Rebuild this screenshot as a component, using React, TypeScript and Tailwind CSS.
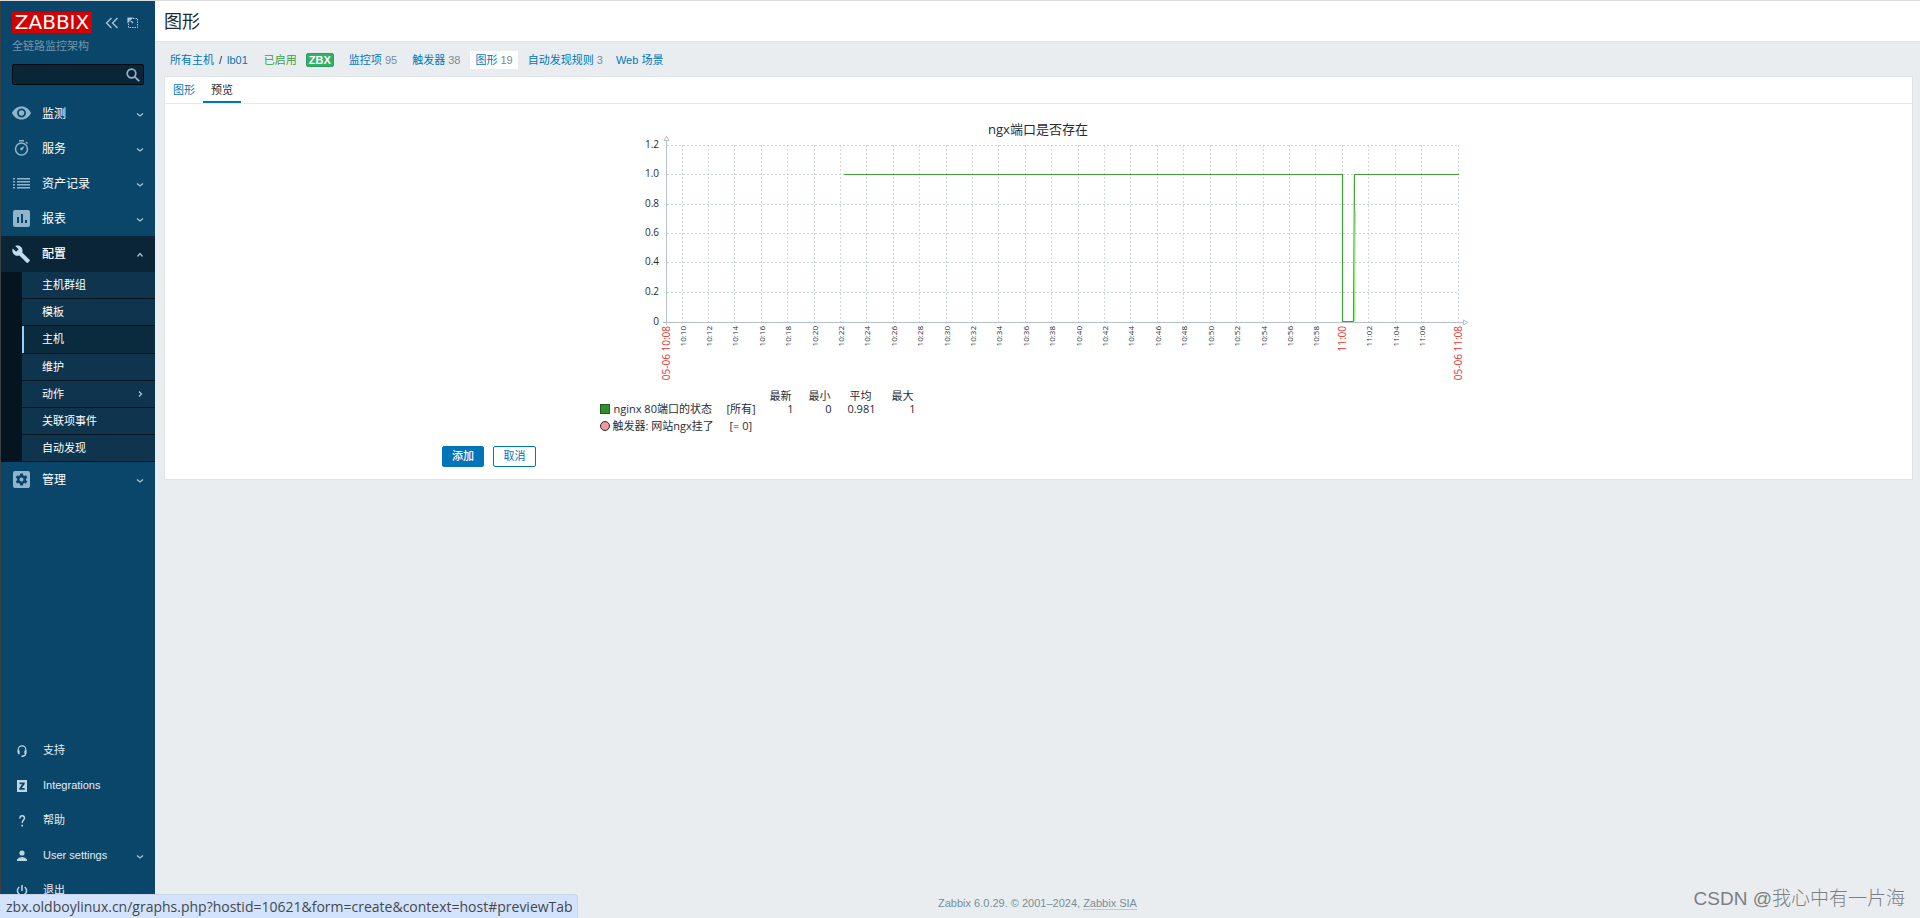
import type { ReactNode } from "react";

const CHEVRONS = {
  down: "M1 3.500l3 2.500 3-2.500",
  up: "M1.500 6.500l2.500-3 2.500 3",
  right: "M3 1.500l2.500 2.500-2.500 2.500",
};

function Chevron({ dir }: { dir: keyof typeof CHEVRONS }) {
  return (
    <svg viewBox="0 0 8 8" className="h-2 w-2 shrink-0" fill="none" stroke="#a9c3d1" strokeWidth="1.3" aria-hidden="true">
      <path d={CHEVRONS[dir]} />
    </svg>
  );
}

function MenuIcon({ name }: { name: string }) {
  const shapes: Record<string, ReactNode> = {
    eye: (
      <>
        <path fillRule="evenodd" d="M0 9C2 5 5 2.500 9.500 2.500S17 5 19 9c-2 4-5 6.500-9.500 6.500S2 13 0 9zm9.500-4.500a4.500 4.500 0 1 0 0 9 4.500 4.500 0 0 0 0-9z" />
        <circle cx="9.500" cy="9" r="2.700" />
      </>
    ),
    clock: (
      <>
        <circle cx="9.500" cy="10" r="6" fill="none" stroke="currentColor" strokeWidth="1.500" />
        <path d="M7 1h5v1.500H7zM13.500 3.500l1-1 1.500 1.500-1 1zM12.500 7l-2 4a1.300 1.300 0 0 1-1.900-1.900z" />
      </>
    ),
    list: <path d="M1 4h2v1.500H1zM5 4h13v1.500H5zM1 7h2v1.500H1zM5 7h13v1.500H5zM1 10h2v1.500H1zM5 10h13v1.500H5zM1 13h2v1.500H1zM5 13h13v1.500H5z" />,
    report: <path fillRule="evenodd" d="M3 1h13q2 0 2 2v13q0 2-2 2H3q-2 0-2-2V3q0-2 2-2zm2 7v6h2V8zm4-3v9h2V5zm4 6v3h2v-3z" />,
    wrench: <path d="M17.500 14.800 10.200 7.500c.7-1.900.3-4-1.200-5.500C7.400.4 5.100.1 3.200.9l3.400 3.400-2.400 2.400L.8 3.400C-.1 5.200.3 7.600 1.900 9.200c1.500 1.500 3.600 1.900 5.500 1.200l7.300 7.300c.3.300.8.300 1.100 0l1.800-1.800c.3-.3.300-.8-.1-1.100z" />,
    gear: (
      <>
        <path fillRule="evenodd" d="M3 1h13q2 0 2 2v13q0 2-2 2H3q-2 0-2-2V3q0-2 2-2zm5.300 2.500-.4 1.700-1.100.7-1.700-.6-1.300 2.200 1.300 1.200v1.500l-1.300 1.200 1.300 2.200 1.700-.6 1.100.7.400 1.800h2.500l.4-1.800 1.100-.7 1.700.6 1.300-2.200-1.300-1.200V8.700l1.300-1.200-1.300-2.200-1.700.6-1.100-.7-.4-1.700z" />
        <circle cx="9.500" cy="9.500" r="2" />
      </>
    ),
  };
  return (
    <svg viewBox="0 0 19 19" className="h-[19px] w-[19px] shrink-0" fill="currentColor" aria-hidden="true">
      {shapes[name]}
    </svg>
  );
}

function FooterIcon({ name }: { name: string }) {
  const shapes: Record<string, ReactNode> = {
    support: (
      <>
        <path d="M2.200 7V4.700a3.800 3.800 0 0 1 7.600 0V8q0 3-3.300 3.200" fill="none" stroke="currentColor" strokeWidth="1.200" />
        <path d="M1.600 5.500h2v3.700h-1q-1-.5-1-2zM8.400 5.500h2v2q0 1.500-1 1.700h-1zM5.500 10.500h2V12h-2z" />
      </>
    ),
    zabbix: <path fillRule="evenodd" d="M1 0h10v12H1zm2.500 2.500v1.700h2.700L3.300 8.300v1.400h5.400V8H5.800l2.900-4V2.500z" />,
    help: (
      <>
        <path d="M3.800 3.500Q4 .8 6.200.8t2.300 2.300C8.500 5 6.200 5.300 6.200 8" fill="none" stroke="currentColor" strokeWidth="1.400" />
        <path d="M5.400 9.800H7v1.700H5.400z" />
      </>
    ),
    user: (
      <>
        <circle cx="6" cy="3" r="2.600" />
        <path d="M1 11V9.500Q2.500 7 6 7t5 2.500V11z" />
      </>
    ),
    power: <path d="M3.300 2a4.600 4.600 0 1 0 5.400 0M6 0v6" fill="none" stroke="currentColor" strokeWidth="1.500" />,
  };
  return (
    <svg viewBox="0 0 12 12" className="h-3 w-3 shrink-0" fill="currentColor" aria-hidden="true">
      {shapes[name]}
    </svg>
  );
}

function MenuLink({ icon, label }: { icon: string; label: string }) {
  return (
    <a href="#" className="flex h-[35px] items-center px-[11px] text-xs text-white">
      <span className="text-[#8fb5cc]"><MenuIcon name={icon} /></span>
      <span className="ml-[11px] flex-1">{label}</span>
      <Chevron dir="down" />
    </a>
  );
}

const MAIN_MENU = [
  { icon: "eye", label: "监测" },
  { icon: "clock", label: "服务" },
  { icon: "list", label: "资产记录" },
  { icon: "report", label: "报表" },
];

const CONFIG_MENU = ["主机群组", "模板", "主机", "维护", "动作", "关联项事件", "自动发现"];

const USER_MENU = [
  { icon: "support", label: "支持" },
  { icon: "zabbix", label: "Integrations" },
  { icon: "help", label: "帮助" },
  { icon: "user", label: "User settings" },
  { icon: "power", label: "退出" },
];

function Sidebar() {
  return (
    <aside className="flex w-[155px] shrink-0 flex-col overflow-hidden border-l border-[#3c4043] bg-[#0a466a]">
      <div className="flex items-center pt-[11px] pr-[15px] pl-[11px]">
        <a href="#" className="flex h-[21px] w-20 items-center justify-center bg-[#d40000] font-['DejaVu_Sans',sans-serif] text-[20px] leading-[21px] text-white">
          ZABBIX
        </a>
        <button type="button" aria-label="收起侧边栏" className="ml-[13px] text-[#a9c9dc]">
          <svg viewBox="0 0 14 12" className="h-3 w-3.5" fill="none" stroke="currentColor" strokeWidth="1.300"><path d="M6.500 1l-5 5 5 5M12.500 1l-5 5 5 5" /></svg>
        </button>
        <button type="button" aria-label="隐藏侧边栏" className="ml-2 text-[#a9c9dc]">
          <svg viewBox="0 0 12 12" className="h-3 w-3" fill="none" stroke="currentColor">
            <path d="M6 1.500h4.500v9h-9V6" strokeDasharray="1.500 1" />
            <path d="M1 5V1h4zM2 2l4 4" fill="currentColor" strokeWidth="1.200" />
          </svg>
        </button>
      </div>
      <div className="mt-1 pl-[11px] text-[11px] leading-[18px] text-[#6f97ad]">全链路监控架构</div>
      <form className="mx-[11px] mt-[9px] flex h-[21px] items-center rounded-xs border border-[#020a10] bg-[#0a2536] pr-[3px]">
        <input type="text" aria-label="搜索" className="h-full min-w-0 flex-1 bg-transparent px-1 text-[11px] text-white outline-none" />
        <button type="button" aria-label="搜索" className="text-[#8fb5cc]">
          <svg viewBox="0 0 14 14" className="h-3.5 w-3.5" fill="none" stroke="currentColor" strokeWidth="1.700"><circle cx="5.500" cy="5.500" r="4.300" /><path d="M8.600 8.600l4.600 4.600" /></svg>
        </button>
      </form>
      <nav className="mt-[11px]">
        {MAIN_MENU.map((item) => <MenuLink key={item.label} {...item} />)}
        <a href="#" className="flex h-9 items-center bg-[#0a2536] px-[11px] text-xs font-medium text-white">
          <span className="text-[#c3dcec]"><MenuIcon name="wrench" /></span>
          <span className="ml-[11px] flex-1">配置</span>
          <Chevron dir="up" />
        </a>
        <ul className="bg-[#05151f] pl-[21px]">
          {CONFIG_MENU.map((label) => (
            <li key={label} className="border-b border-[#05151f]">
              <a
                href="#"
                className={
                  label === "主机"
                    ? "flex h-[27px] items-center border-l-2 border-[#8fd0ff] bg-[#0a2b3e] pr-[11px] pl-[18px] text-[11px] text-white"
                    : "flex h-[26px] items-center bg-[#0f344d] pr-[11px] pl-5 text-[11px] text-white"
                }
              >
                <span className="flex-1">{label}</span>
                {label === "动作" && <Chevron dir="right" />}
              </a>
            </li>
          ))}
        </ul>
        <MenuLink icon="gear" label="管理" />
      </nav>
      <nav className="mt-auto pb-[10px]">
        {USER_MENU.map(({ icon, label }) => (
          <a key={label} href="#" className="flex h-[35px] items-center pr-[11px] pl-[15px] text-[11px] text-[#e3edf3]">
            <span className="text-[#c0d6e3]"><FooterIcon name={icon} /></span>
            <span className="ml-[15px] flex-1">{label}</span>
            {icon === "user" && <Chevron dir="down" />}
          </a>
        ))}
      </nav>
    </aside>
  );
}

function Breadcrumbs() {
  return (
    <nav className="flex h-[34px] items-center pt-[2px] pl-[15px] text-[11px] text-[#0275b8]">
      <a href="#">所有主机</a>
      <span className="mx-[5px] text-[#1f2c33]">/</span>
      <a href="#">lb01</a>
      <span className="ml-4 text-[#429e47]">已启用</span>
      <span className="ml-[9px] flex h-3.5 items-center rounded-xs border border-[#2f9f5e] bg-[#34af67] px-[2px] text-[11px] font-bold text-white">ZBX</span>
      <a href="#" className="ml-[15px]">监控项 <span className="text-[#768d99]">95</span></a>
      <a href="#" className="ml-[15px]">触发器 <span className="text-[#768d99]">38</span></a>
      <a href="#" className="ml-[10px] flex h-[18px] items-center gap-[3px] bg-white px-[5px]">图形 <span className="text-[#768d99]">19</span></a>
      <a href="#" className="ml-[10px]">自动发现规则 <span className="text-[#768d99]">3</span></a>
      <a href="#" className="ml-[13px]">Web 场景</a>
    </nav>
  );
}

const VALUES = [
  { label: "1.2", y: 45 },
  { label: "1.0", y: 74 },
  { label: "0.8", y: 104 },
  { label: "0.6", y: 133 },
  { label: "0.4", y: 162 },
  { label: "0.2", y: 192 },
  { label: "0", y: 222 },
];

// two-minute ticks, 10:10 to 11:06
const TICKS = Array.from({ length: 29 }, (_, i) => {
  const minutes = 610 + i * 2;
  return {
    label: `${Math.floor(minutes / 60)}:${String(minutes % 60).padStart(2, "0")}`,
    x: Math.floor(82 + i * 26.41) + 0.5,
  };
});

function TimeLabel({ x, label, major }: { x: number; label: string; major?: boolean }) {
  return (
    <text
      transform={`translate(${x + 3} 226) rotate(-90)`}
      textAnchor="end"
      fontSize={major ? 10 : 8}
      fill={major ? "#e33734" : "#1f2c33"}
    >
      {label}
    </text>
  );
}

function Chart() {
  return (
    <svg viewBox="0 0 878 290" className="h-[290px] w-[878px]" fontFamily="'Open Sans', 'Noto Sans CJK SC', sans-serif" role="img" aria-label="ngx端口是否存在">
      <text x="438" y="34" textAnchor="middle" fontSize="13" fill="#1f2c33">ngx端口是否存在</text>
      <g stroke="#ccd5d9" strokeDasharray="2 2">
        {VALUES.slice(0, 6).map((v) => <path key={v.label} d={`M67 ${v.y + 0.5}H859`} />)}
        {TICKS.map((t) => <path key={t.label} d={`M${t.x} 45V222`} />)}
        <path d="M858.500 45V222" />
      </g>
      <g stroke="#b4c1c8" fill="#fff">
        <path d="M66.500 41V225M63 222.500H863" />
        <path d="M64 40.500h5l-2.500-4.500zM863.500 220v5l4.500-2.500z" />
      </g>
      {VALUES.map((v) => (
        <text key={v.label} x="59" y={v.y + 3} textAnchor="end" fontSize="10" fill="#1f2c33">{v.label}</text>
      ))}
      <TimeLabel x={66.5} label="05-06 10:08" major />
      {TICKS.map((t) => <TimeLabel key={t.label} x={t.x} label={t.label} major={t.label === "11:00"} />)}
      <TimeLabel x={858.5} label="05-06 11:08" major />
      <path d="M244 74.500H742.500V221.500H753.500L754.500 74.500H859" fill="none" stroke="#429e37" strokeWidth="1.200" />
      <path d="M755.300 111L754.500 221" stroke="#8dfb74" strokeWidth="1.200" />
    </svg>
  );
}

function Legend() {
  return (
    <table className="w-[316px] table-fixed font-['Open_Sans','Noto_Sans_CJK_SC',sans-serif] text-[11px] leading-[13px] text-[#1f2c33]">
      <colgroup>
        <col className="w-[127px]" />
        <col className="w-[33px]" />
        <col className="w-[34px]" />
        <col className="w-[38px]" />
        <col className="w-[44px]" />
        <col className="w-[40px]" />
      </colgroup>
      <thead>
        <tr className="text-right leading-3">
          <td />
          <td />
          <th className="pr-[2px] font-normal">最新</th>
          <th className="pr-px font-normal">最小</th>
          <th className="pr-1 font-normal">平均</th>
          <th className="pr-[2px] font-normal">最大</th>
        </tr>
      </thead>
      <tbody>
        <tr className="text-right">
          <td className="text-left whitespace-nowrap">
            <span className="mr-1 inline-block h-[10px] w-[10px] border border-[#1c5c1c] bg-[#338c2e] align-[-1px]" />
            nginx 80端口的状态
          </td>
          <td className="text-left whitespace-nowrap">[所有]</td>
          <td>1</td>
          <td>0</td>
          <td>0.981</td>
          <td>1</td>
        </tr>
        <tr>
          <td className="pt-1 whitespace-nowrap">
            <span className="mr-[3px] inline-block h-[10px] w-[10px] rounded-full border border-[#2b2b2b] bg-[#f19999] align-[-1px]" />
            触发器: 网站ngx挂了
          </td>
          <td className="pt-1 pl-[3px] whitespace-nowrap">[= 0]</td>
        </tr>
      </tbody>
    </table>
  );
}

export default function App() {
  return (
    <div className="relative flex h-screen overflow-hidden border-t border-[#dadce0] bg-[#e9edf0] font-['Liberation_Sans','Noto_Sans_CJK_SC',sans-serif]">
      <Sidebar />
      <div className="flex min-w-0 flex-1 flex-col">
        <header className="flex h-[41px] items-center border-b border-[#dce2e5] bg-white pt-[2px] pl-[9px]">
          <h1 className="text-lg text-[#1f2c33]">图形</h1>
        </header>
        <Breadcrumbs />
        <main className="mr-[7px] ml-[9px] border border-[#dfe4e7] bg-white">
          <div className="flex h-[27px] border-b border-[#e6eaec] text-[11px]">
            <button type="button" className="border-b-2 border-transparent px-2 pt-[2px] text-[#0275b8]">图形</button>
            <button type="button" className="border-b-2 border-[#0275b8] px-2 pt-[2px] text-[#1f2c33]">预览</button>
          </div>
          <div className="flex flex-col items-center pb-[14px]">
            <div className="mt-[-4px]">
              <Chart />
              <Legend />
            </div>
          </div>
          <div className="flex gap-[9px] pb-3 pl-[277px]">
            <button type="button" className="h-[21px] w-[42px] rounded-xs border border-[#0275b8] bg-[#0275b8] text-[11px] font-medium text-white">添加</button>
            <button type="button" className="h-[21px] w-[43px] rounded-xs border border-[#0275b8] bg-white text-[11px] text-[#0275b8]">取消</button>
          </div>
        </main>
        <footer className="mt-auto pb-2 text-center text-[11px] leading-[14px] text-[#768d99]">
          Zabbix 6.0.29. © 2001–2024, <a href="#" className="border-b border-[#c0cacf]">Zabbix SIA</a>
        </footer>
      </div>
      <div className="absolute bottom-0 left-0 h-6 rounded-tr border-t border-r border-[#c8d3e6] bg-[#d3e3fd] pr-1 pl-[6px] font-['Open_Sans',sans-serif] text-sm leading-6 whitespace-nowrap text-[#474747]">
        zbx.oldboylinux.cn/graphs.php?hostid=10621&amp;form=create&amp;context=host#previewTab
      </div>
      <div className="absolute right-[15px] bottom-[3px] text-[19px] leading-8 font-light text-[#7c7f82]">
        CSDN @我心中有一片海
      </div>
    </div>
  );
}
